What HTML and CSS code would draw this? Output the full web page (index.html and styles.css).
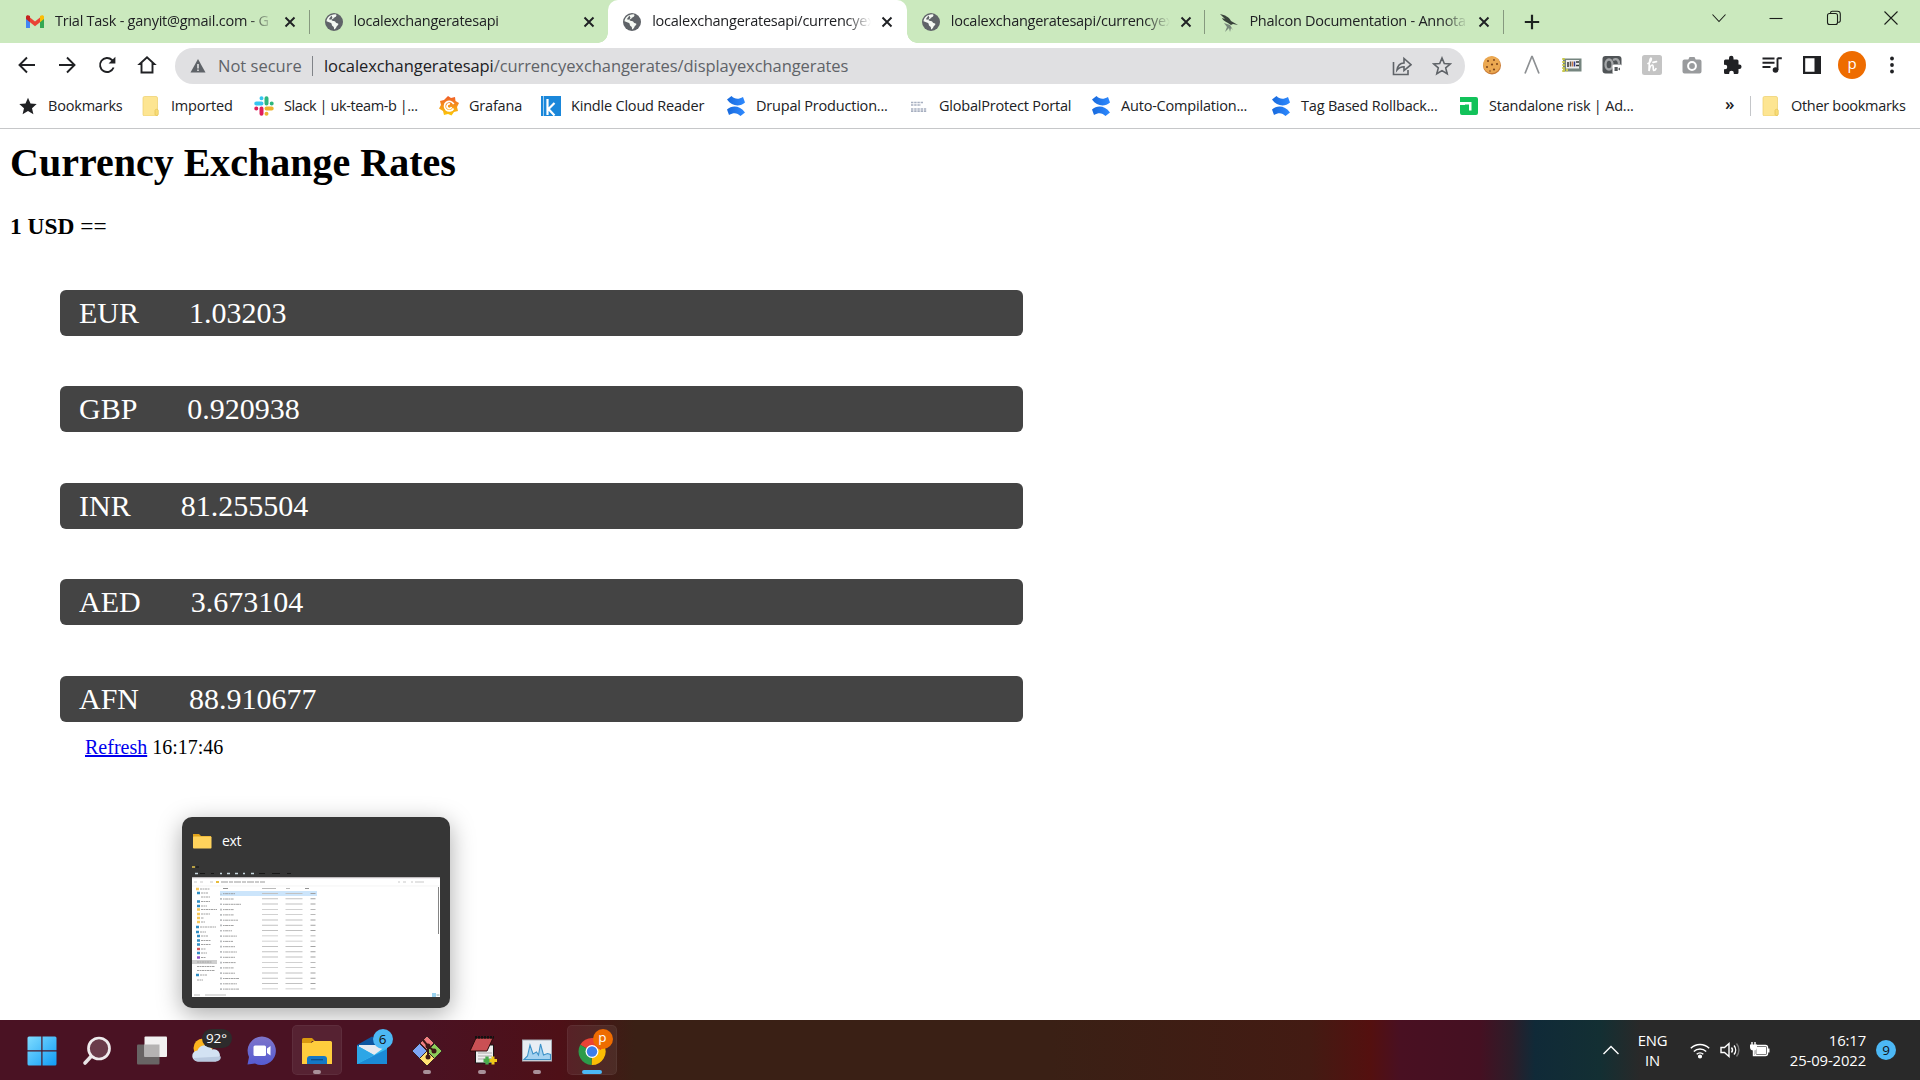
FILE: index.html
```html
<!DOCTYPE html>
<html lang="en">
<head>
<meta charset="utf-8">
<title>localexchangeratesapi/currencyexchangerates</title>
<link rel="stylesheet" href="styles.css">
</head>
<body>
<svg class="defs" width="0" height="0">
  <defs>
    <symbol id="globe" viewBox="0 0 20 20"><circle cx="10" cy="10" r="9" fill="#5f6368"/><path d="M11.500 2.300c1.500.8 1 1.700.3 2.400-.8.600-2 .6-2.200 1.600-.2.900-1.600.7-1.900 1.500-.3.900.7 1.200 1.900 1.100 1.500-.1 1.800.8 2.200 1.700.5.900 2.500.4 2.600 1.500 0 1.300-1.500 1.500-1.900 2.700-.3 1-1 2.100-2 2.600-.8-.4-.3-1.700-.8-2.500-.4-.8-1.900-.9-1.900-2.200 0-1-.4-1.600-1.400-2-1.200-.5-2.600-.8-3.900-1.500C2.800 6 6 2.200 11.500 2.300z" fill="#f4f8f3"/><path d="M7.500 3.500 4.800 7.200l2.600.6 1-2z" fill="#5f6368"/></symbol>
    <symbol id="close" viewBox="0 0 12 12"><path d="M1.500 1.500l9 9m0-9l-9 9" stroke="#1f2124" stroke-width="1.900"/></symbol>
    <symbol id="folder" viewBox="0 0 20 20"><path d="M3.500.5H15a1.500 1.500 0 0 1 1.500 1.500v17a1 1 0 0 1-1 1h-12A1.500 1.500 0 0 1 2 18.500V2A1.500 1.500 0 0 1 3.500.5z" fill="#fde592" stroke="#edcf6b" stroke-width=".7"/><path d="M14 14.500a1.700 1.700 0 0 1 3.300 0V18c0 2-3.300 2-3.300 0z" fill="#f8dc76" stroke="#dfbd4c" stroke-width=".6"/></symbol>
    <linearGradient id="cb" x1="0" x2="1"><stop offset="0" stop-color="#1769dc"/><stop offset="1" stop-color="#2f8aff"/></linearGradient>
    <symbol id="confluence" viewBox="0 0 20 20"><path d="M1 3.500 5.500 0C8.500 3 12 4 17 1L19 6.500C14 11 6 10.500 1 3.500z" fill="url(#cb)"/><path d="M19 16.500 14.500 20C11.500 17 8 16 3 19L1 13.500C6 9 14 9.500 19 16.500z" fill="url(#cb)"/></symbol>
  </defs>
</svg>

<header class="browser">
  <div class="tabs">
    <div class="tab">
      <svg class="fav" viewBox="0 0 20 20"><path d="M1 4.500v11.500h4V9.500z" fill="#4285f4"/><path d="M19 4.500v11.500h-4V9.500z" fill="#34a853"/><path d="M5 5.500 10 9.500 15 5.500V10.300L10 14.200 5 10.300z" fill="#ea4335"/><path d="M1 4.800C1 3 3.300 2.600 5 4v6.300L1 7z" fill="#c5221f"/><path d="M19 4.800C19 3 16.700 2.600 15 4v6.300L19 7z" fill="#fbbc04"/></svg>
      <span class="tab-title">Trial Task - ganyit@gmail.com - G</span>
      <svg class="tab-close"><use href="#close"/></svg>
    </div>
    <div class="tab no-sep">
      <svg class="fav"><use href="#globe"/></svg>
      <span class="tab-title">localexchangeratesapi</span>
      <svg class="tab-close"><use href="#close"/></svg>
    </div>
    <div class="tab active">
      <svg class="fav"><use href="#globe"/></svg>
      <span class="tab-title">localexchangeratesapi/currencyex</span>
      <svg class="tab-close"><use href="#close"/></svg>
    </div>
    <div class="tab">
      <svg class="fav"><use href="#globe"/></svg>
      <span class="tab-title">localexchangeratesapi/currencyex</span>
      <svg class="tab-close"><use href="#close"/></svg>
    </div>
    <div class="tab">
      <svg class="fav" viewBox="0 0 20 20"><path d="M1 2c5 1 9 3 11 7l7 4-5-1-2 1C8 10 4 9 3 6l3 1z" fill="#39443b"/><path d="M5 11l6 2 3 5-2-2-1 4-1-4-4 4 2-5z" fill="#77877a"/></svg>
      <span class="tab-title">Phalcon Documentation - Annota</span>
      <svg class="tab-close"><use href="#close"/></svg>
    </div>
    <svg class="new-tab" viewBox="0 0 16 16"><path d="M8 .8v14.400M.8 8h14.400" stroke="#1d2320" stroke-width="2.200"/></svg>
    <div class="win-controls">
      <svg viewBox="0 0 16 16"><path d="M1.500 4.500 8 11.500l6.500-7" /></svg>
      <svg viewBox="0 0 16 16"><path d="M1.500 8.500h13"/></svg>
      <svg viewBox="0 0 16 16"><rect x="1.500" y="3.500" width="10" height="11" rx="2"/><path d="M4.500 3.500V3a1.800 1.800 0 0 1 1.800-1.800h5.200A2.800 2.800 0 0 1 14.300 4v6.500a1.800 1.800 0 0 1-1.800 1.800h-.8"/></svg>
      <svg viewBox="0 0 16 16"><path d="M1.500 1.500l13 13m0-13l-13 13"/></svg>
    </div>
  </div>

  <div class="toolbar">
    <div class="nav">
      <svg viewBox="0 0 20 20"><path d="M18 10H3M10 2.500 2.500 10l7.500 7.500"/></svg>
      <svg viewBox="0 0 20 20"><path d="M2 10h15M10 2.500l7.500 7.500-7.500 7.500"/></svg>
      <svg viewBox="0 0 20 20"><path d="M16.600 12.500A7 7 0 1 1 15 5l2 2"/><path d="M18.400 1.800v6.800h-6.800z" fill="#202124" stroke="none"/></svg>
      <svg viewBox="0 0 20 20"><path d="M4.500 17.500V9H2.700L10 2.300 17.300 9h-1.800v8.500z"/></svg>
    </div>
    <div class="omnibox">
      <svg class="warn" viewBox="0 0 16 16"><path d="M8 1l7.500 13.500H.5z" fill="#5f6368"/><path d="M8 6v4.500M8 11.600v1.500" stroke="#fff" stroke-width="1.300"/></svg>
      <span class="insecure">Not secure</span>
      <span class="url"><b>localexchangeratesapi</b>/currencyexchangerates/displayexchangerates</span>
      <svg class="share" viewBox="0 0 20 20"><path d="M1.500 6v12.500h14.500V14"/><path d="M5 14c.6-4.500 3-6.800 7-7V2.500L19 8.700l-7 5.800V10.700c-3 0-5.200 1-7 3.300z"/></svg>
      <svg class="share" viewBox="0 0 20 20"><path d="M10 2l2.300 5.500 6 .5-4.600 3.900 1.500 5.900L10 14.600l-5.200 3.200 1.500-5.900L1.700 8l6-.5z"/></svg>
    </div>
    <div class="exts">
      <svg viewBox="0 0 20 20"><circle cx="10" cy="10.500" r="9" fill="#c87a35"/><circle cx="9.700" cy="9.500" r="8.600" fill="#eba851"/><g fill="#7b4219"><circle cx="6" cy="6" r="1"/><circle cx="12" cy="5" r=".9"/><circle cx="10" cy="9.500" r="1.100"/><circle cx="15" cy="9" r="1"/><circle cx="5" cy="12" r="1"/><circle cx="12" cy="14.500" r="1.100"/><circle cx="8" cy="16" r=".8"/></g></svg>
      <svg viewBox="0 0 20 20"><path d="M3 18.500 9.800 1.500h.4L17 18.500" fill="none" stroke="#8d9093" stroke-width="1.700"/></svg>
      <svg viewBox="0 0 20 20"><rect x="1" y="3.500" width="18.500" height="13" fill="#75857f"/><path d="M1.500 3v14M1 15h6" stroke="#c9c94b" stroke-width="2.500" stroke-dasharray="2 1"/><rect x="4" y="5" width="13" height="8.500" fill="#eee"/><path d="M6 7v5M14 7h3M14 10.500h3" stroke="#333" stroke-width="1.500"/><path d="M8.500 6.500v5" stroke="#555" stroke-width="1.500"/><path d="M10.500 6.500v5" stroke="#c87d4d" stroke-width="1.500"/><path d="M12.500 6.500v5" stroke="#303c8c" stroke-width="1.500"/></svg>
      <svg viewBox="0 0 20 20"><rect x=".5" y="1" width="19" height="17.500" rx="3" fill="#505457"/><ellipse cx="7" cy="9.500" rx="3.500" ry="5" fill="none" stroke="#a4a6a8" stroke-width="2.300"/><path d="M11 5c4-2 6 0 6 4" fill="none" stroke="#a4a6a8" stroke-width="2.300"/><rect x="10.500" y="9.500" width="9.500" height="9.500" rx="1.500" fill="#fff"/><path d="M12.500 12h3.200v4h-3.200zM16 14l2-1.500v3z" fill="#55595c"/></svg>
      <svg viewBox="0 0 20 20"><rect width="20" height="20" rx="2.500" fill="#c4c4c4"/><path d="M6 8.500c2.500-.5 4.300-5.500 2.800-5.500C7 3 7.300 11 7 16c.8-4 2-6 3.300-6 1.700 0 .2 5.500 1.700 5.500 1 0 1.500-.7 2-1.800M11 7.300l3.500-.6" fill="none" stroke="#fff" stroke-width="1.700" stroke-linecap="round"/></svg>
      <svg viewBox="0 0 20 20"><path d="M2.500 4.500h3.800L7.500 2h5l1.200 2.500h3.800A2 2 0 0 1 19.500 6.500v10a2 2 0 0 1-2 2h-15a2 2 0 0 1-2-2v-10a2 2 0 0 1 2-2z" fill="#999b9d"/><circle cx="10" cy="11" r="3.900" fill="none" stroke="#fff" stroke-width="2"/></svg>
      <svg viewBox="0 0 20 20"><path d="M7 4.500V3a2 2 0 0 1 4.500 0v1.500H15A1.500 1.500 0 0 1 16.500 6v3.500h.8a2.200 2.200 0 0 1 0 4.500h-.8v3.500A1.500 1.500 0 0 1 15 19h-3.200v-1a2.200 2.200 0 0 0-4.600 0v1H3.500A1.500 1.500 0 0 1 2 17.500v-3.300h1a2.200 2.200 0 0 0 0-4.500H2V6a1.500 1.500 0 0 1 1.500-1.500z" fill="#202124"/></svg>
      <svg viewBox="0 0 20 20"><path d="M.5 3.500h12M.5 7.700h12M.5 12h8M15.500 3.300V15M15.500 3.300h4.300" fill="none" stroke="#202124" stroke-width="1.900"/><circle cx="13.500" cy="15" r="2.800" fill="#202124"/></svg>
      <svg viewBox="0 0 20 20"><path d="M1 1h18v18H1zM3.200 3.200v13.600h9.300V3.200z" fill="#202124" fill-rule="evenodd"/></svg>
      <span class="avatar">p</span>
      <svg viewBox="0 0 20 20"><g fill="#202124"><circle cx="10" cy="3.500" r="1.900"/><circle cx="10" cy="10" r="1.900"/><circle cx="10" cy="16.500" r="1.900"/></g></svg>
    </div>
  </div>

  <div class="bookmarks">
    <div class="bm"><svg viewBox="0 0 20 20"><path d="M10 1.800l2.500 5.700 6.200.6-4.700 4.100 1.400 6.100L10 15.100l-5.400 3.200L6 12.200 1.300 8.100l6.200-.6z" fill="#202124"/></svg>Bookmarks</div>
    <div class="bm"><svg><use href="#folder"/></svg>Imported</div>
    <div class="bm slack"><svg viewBox="0 0 20 20" stroke-width="4" stroke-linecap="round"><path d="M7.500 2.300v0M2.300 7.500h5.200" stroke="#36c5f0"/><path d="M12.500 2.300v5.200M17.700 7.500v0" stroke="#2eb67d"/><path d="M12.500 17.700v0M12.500 12.500h5.200" stroke="#ecb22e"/><path d="M2.300 12.500v0M7.500 12.500v5.200" stroke="#e01e5a"/></svg>Slack | uk-team-b |...</div>
    <div class="bm"><svg viewBox="0 0 20 20"><defs><linearGradient id="gf" x2="0" y2="1"><stop stop-color="#f05a28"/><stop offset="1" stop-color="#fbca0a"/></linearGradient></defs><path d="M9 0l3 2 4-1 .5 4L20 7l-2 4 1 4-4 1-2.500 3.500L9 18l-4 1-1-4-4-2.500L2 9 1 5l4-1z" fill="url(#gf)"/><path d="M14.500 12.500a4.800 4.800 0 1 1 .2-4.300M12.500 11a2.300 2.300 0 1 1-1.500-3" fill="none" stroke="#fff" stroke-width="1.700"/></svg>Grafana</div>
    <div class="bm"><svg viewBox="0 0 20 20"><path d="M0 0h20v20H0z" fill="#1a87da"/><path d="M6.500 3v16M13.500 7l-6 6 6 6.500" fill="none" stroke="#fff" stroke-width="2.200"/><path d="M2.500 0v20" stroke="#9acdf2" stroke-width="1"/></svg>Kindle Cloud Reader</div>
    <div class="bm"><svg><use href="#confluence"/></svg>Drupal Production...</div>
    <div class="bm"><svg viewBox="0 0 20 20"><path d="M2 6.500h12M2 9h10M2 13h16M2 15.200h16" stroke="#a7afc0" stroke-width="1.700" stroke-dasharray="2.400 .8"/></svg>GlobalProtect Portal</div>
    <div class="bm"><svg><use href="#confluence"/></svg>Auto-Compilation...</div>
    <div class="bm"><svg><use href="#confluence"/></svg>Tag Based Rollback...</div>
    <div class="bm"><svg viewBox="0 0 20 20"><path d="M1 1h16A2 2 0 0 1 19 3v14a2 2 0 0 1-2 2H3a2 2 0 0 1-2-2V9h5V7H1z" fill="#12c25a"/><path d="M1 6h11.500v8.500H10V8.500H1z" fill="#fff"/></svg>Standalone risk | Ad...</div>
    <span class="more">»</span>
    <div class="bm other"><svg><use href="#folder"/></svg>Other bookmarks</div>
  </div>
</header>

<main class="page">
  <h1>Currency Exchange Rates</h1>
  <h3>1 USD <span>==</span></h3>
  <ul class="rates">
    <li><span>EUR</span><span>1.03203</span></li>
    <li><span>GBP</span><span>0.920938</span></li>
    <li><span>INR</span><span>81.255504</span></li>
    <li><span>AED</span><span>3.673104</span></li>
    <li><span>AFN</span><span>88.910677</span></li>
  </ul>
  <p class="refresh"><a href="#">Refresh</a> 16:17:46</p>
</main>

<aside class="preview">
  <div class="preview-title">
    <svg viewBox="0 0 20 16"><path d="M1 1h6l2 2h10v4H1z" fill="#e0a21b"/><rect x="1" y="3.500" width="18.500" height="12" rx=".8" fill="#ffd35c"/></svg>
    ext
  </div>
  <svg class="thumb" viewBox="0 0 248 132">
    <path d="M0 2h3" stroke="#e4c44b" stroke-width="1.500"/><path d="M4 2h3" stroke="#111" stroke-width="1"/>
    <path d="M3 8.500h3M28 8.500h2M35 8.500h3M43 8.500h3M51 8.500h2M59 8.500h3" stroke="#c8d8df" stroke-width="1.500"/>
    <path d="M8 8.500h5M19 8.500h3M67 8.500h6M80 8.500h8M95 8.500h4" stroke="#171717" stroke-width="1"/>
    <rect y="12.500" width="248" height="119.500" fill="#fff"/><rect y="12.500" width="248" height="1" fill="#e6dfe3"/>
    <path d="M0 21h248" stroke="#ececec" stroke-width=".6"/>
    <path d="M2 17h3M8 17h3M18 17h3M206 17h2M211 17h3M219 17h2M223 17h9" stroke="#bbb" stroke-width=".8"/>
    <path d="M24 17h3" stroke="#e8bd3c" stroke-width="2"/><path d="M29 17h44" stroke="#999" stroke-width="1" stroke-dasharray="7 1 4 1"/>
    <rect x="28" y="26" width="97" height="5" fill="#cce5fb"/>
    <path d="M31 23.500h5M113 23.500h4" stroke="#777" stroke-width=".8"/><path d="M70 23.500h14M94 23.500h4" stroke="#aaa" stroke-width=".8"/>
    <path d="M29 28.700v97" stroke="#a4a8ac" stroke-width="1.500" stroke-dasharray="1.700 3.600" stroke-dashoffset=".9"/>
    <g stroke="#999" stroke-width=".9" stroke-dasharray="1.600 .5 3 .4">
      <path d="M31 28.700h12M31 34h11M31 39.300h18M31 44.600h11M31 49.900h11M31 55.200h15M31 60.500h11M31 65.800h9M31 71.100h14M31 76.400h10M31 81.700h12M31 87h14M31 92.300h12M31 97.600h13M31 102.900h11M31 108.200h12M31 113.500h16M31 118.800h14M31 124.100h16"/>
    </g>
    <g stroke="#c2c2c2" stroke-width=".9">
      <path d="M78 28v98" stroke-width="16" stroke-dasharray=".9 4.400"/>
      <path d="M102 28v98" stroke-width="17" stroke-dasharray=".9 4.400"/>
      <path d="M121 28v98" stroke="#a2a2a2" stroke-width="5" stroke-dasharray=".9 4.400"/>
    </g>
    <rect y="95" width="25" height="4" fill="#cfcfcf"/>
    <path d="M4 24h3M5 44.500h3M5 49h3M5 53h3M5 57h3" stroke="#f6c85a" stroke-width="2.400"/>
    <path d="M5 28h3M5 36.500h3M5 41h3M4 62h3M4 67h3M5 71h3M5 75.500h3M5 79.500h3M5 88h3M4 110h3" stroke="#318ec4" stroke-width="2.400"/>
    <path d="M5 84h3" stroke="#d3575a" stroke-width="2.400"/><path d="M5 92.500h3" stroke="#8e50c9" stroke-width="2.400"/>
    <path d="M8 24h10M9 28h7M9 32h9M9 36.500h9M9 41h6M9 44.500h16M9 49h9M9 53h3M9 57h4M8 62h16M8 67h6M9 71h7M9 75.500h10M9 79.500h10M9 84h5M9 88h6M9 92.500h5M5 97h15M5 101.500h18M5 105.500h18M8 110h7M5 115h6" stroke="#a2a2a2" stroke-width="1" stroke-dasharray="2 .5"/>
    <path d="M2 130h6M13 130h21" stroke="#aaa" stroke-width=".8"/>
    <path d="M246.500 22v47" stroke="#858585" stroke-width="1"/><rect x="240" y="128" width="4" height="4" fill="#9bd3ef"/><path d="M244.500 130h3" stroke="#8aa" />
  </svg>
</aside>

<footer class="taskbar">
  <div class="apps">
    <div class="app"><svg viewBox="0 0 30 30"><defs><linearGradient id="wn" x2="1" y2="1"><stop stop-color="#7fdcff"/><stop offset="1" stop-color="#109cf5"/></linearGradient></defs><path d="M.5 2a1.500 1.500 0 0 1 1.500-1.500h12.300v13.800H.5zM15.500.5H28A1.500 1.500 0 0 1 29.500 2v12.300h-14zM.5 15.500h13.800v14H2A1.500 1.500 0 0 1 .5 28zM15.500 15.500h14V28a1.500 1.500 0 0 1-1.500 1.500H15.500z" fill="url(#wn)"/></svg></div>
    <div class="app"><svg viewBox="0 0 30 30"><path d="M9.500 20 3 27" stroke="#e9e4e6" stroke-width="3.600" stroke-linecap="round"/><circle cx="17" cy="12.500" r="10.500" fill="#6a3c4b" stroke="#efebed" stroke-width="2.700"/></svg></div>
    <div class="app"><svg viewBox="0 0 30 30"><rect x="0" y="8.500" width="22.500" height="20" rx="1" fill="#686464"/><rect x="7.500" y=".5" width="22.500" height="20.500" rx="1" fill="#f2f1f1"/><path d="M7.500 8.500h15v12.500h-15z" fill="#b5b3b3"/></svg></div>
    <div class="app"><svg viewBox="0 0 30 30"><circle cx="11" cy="12" r="9.500" fill="#fbb31e"/><path d="M6 25.500a5.500 5.500 0 0 1-.5-11 8 8 0 0 1 14.500-1 6 6 0 1 1 3.500 12z" fill="#d3e2f3"/><path d="M1.500 22a5 5 0 0 0 4.500 3.500h18a5.500 5.500 0 0 0 5-5z" fill="#b9c9df"/></svg><span class="temp">92°</span></div>
    <div class="app"><svg viewBox="0 0 30 30"><defs><linearGradient id="ch" x2="0" y2="1"><stop stop-color="#7e75ca"/><stop offset="1" stop-color="#555bd2"/></linearGradient></defs><path d="M15 .5a14.300 14.300 0 1 1-7 27L.5 28.500 2 21A14.300 14.300 0 0 1 15 .5z" fill="url(#ch)"/><rect x="6.500" y="9.500" width="12.500" height="10.500" rx="1.500" fill="#fff"/><path d="M20 12.500l3.500-2.500v9.500L20 17z" fill="#fff"/></svg></div>
    <div class="app open"><svg viewBox="0 0 30 30"><path d="M0 3.500A1.500 1.500 0 0 1 1.500 2h8.500l3 3h-3l-2 3H0z" fill="#d9990f"/><path d="M0 7h9l3-2h16.500A1.500 1.500 0 0 1 30 6.500V28H0z" fill="#ffcd3d"/><path d="M5 28v-5a3 3 0 0 1 3-3h14a3 3 0 0 1 3 3v5z" fill="#1478c5"/><path d="M9 23.700h12" stroke="#0b4f8a" stroke-width="1.300"/></svg></div>
    <div class="app"><svg viewBox="0 0 30 30"><path d="M0 9 15 .5 30 9v5H0z" fill="#0d56a0"/><path d="M2 9h26v10H2z" fill="#e6eaf0"/><path d="M0 9.500 17 19 30 9.500V28H0z" fill="#39bdf2"/><path d="M0 28 30 13v15z" fill="#1b8ad6"/><path d="M0 9.500 17 19 0 28z" fill="#2da6e6"/></svg><span class="badge mail">6</span></div>
    <div class="app running"><svg viewBox="0 0 30 30"><g stroke="#3a2022" stroke-width="1"><path d="M15 0l7 7-7 7-7-7z" fill="#f07e80"/><path d="M7.500 7.500l7.500 7.500-7.500 7.500L0 15z" fill="#7ea6f6"/><path d="M22.500 7.500 30 15l-7.500 7.500L15 15z" fill="#8ccd59"/><path d="M15 15l7.500 7.500L15 30l-7.500-7.500z" fill="#ffe173"/></g><path d="M11 4l5 6v12M16 10l6 5" fill="none" stroke="#3c1715" stroke-width="2"/><g fill="#3c1715"><circle cx="16" cy="10" r="2.500"/><circle cx="16" cy="21" r="2.500"/><circle cx="22" cy="15" r="2.500"/></g></svg></div>
    <div class="app running"><svg viewBox="0 0 30 30"><path d="M8.500 9h18v18h-18z" fill="#eee" stroke="#151515" stroke-width="1"/><path d="M11 17h14M11 20h14M11 23h14" stroke="#aaa"/><path d="M9 2h17l-6 13H3z" fill="#ca5054" stroke="#2a0b0b"/><path d="M8 1.200h19" stroke="#111" stroke-width="2.400" stroke-dasharray="2 1"/><path d="M20 20.500v8M16.500 24.500h7.500" stroke="#48ac4c" stroke-width="3.300"/><path d="M26 20.500v8M22.500 24.500H30" stroke="#f0c719" stroke-width="3"/></svg></div>
    <div class="app running"><svg viewBox="0 0 30 30"><rect x=".5" y="4" width="29" height="21" fill="#e8eef4" stroke="#a7adb5"/><path d="M2 23.500 5.500 20 8 9l3 9 3.500-2 2 3 2-11 3 11 4-1.500 3 1v5z" fill="#a5d3f1" stroke="#3d92c8" stroke-width="1.100"/></svg></div>
    <div class="app open current"><svg viewBox="0 0 30 30"><path d="M15 15.500 3.300 8.700A13.600 13.600 0 0 1 26.800 8.700z" fill="#ea4335"/><path d="M15 15.500 26.800 8.700A13.600 13.600 0 0 1 14.500 29z" fill="#fbbc04"/><path d="M15 15.500 14.500 29A13.600 13.600 0 0 1 3.300 8.700z" fill="#2c9c4a"/><path d="M15 9h11.800l-3 5z" fill="#ea4335"/><circle cx="15" cy="15.500" r="6.500" fill="#fff"/><circle cx="15" cy="15.500" r="5.200" fill="#3b7eea"/></svg><span class="badge profile">p</span></div>
  </div>
  <div class="tray">
    <svg class="chev" viewBox="0 0 18 12"><path d="M1.500 10 9 2.500l7.500 7.500"/></svg>
    <div class="lang">ENG<br>IN</div>
    <svg viewBox="0 0 20 20"><path d="M.8 8.300a13 13 0 0 1 18.400 0M3.800 11.500a8.800 8.800 0 0 1 12.400 0M6.700 14.300a4.700 4.700 0 0 1 6.600 0"/><circle cx="10" cy="16.500" r="1.400" fill="#fff"/></svg>
    <svg viewBox="0 0 20 20"><path d="M1 7.500h3.500L9 3.500v13l-4.500-4H1z"/><path d="M11.500 7.500a4 4 0 0 1 0 5M14 5.500a7 7 0 0 1 0 9"/><path d="M16.500 3.500a10 10 0 0 1 0 13" stroke="#777"/></svg>
    <svg viewBox="0 0 20 20"><rect x="5" y="5.500" width="12.500" height="10" rx="2"/><rect x="7" y="7.500" width="8.500" height="6" fill="#fff"/><path d="M18.500 8.500v4" stroke-width="2"/><path d="M0 4.500h7V7a3.500 3.500 0 0 1-7 0z" fill="#fff" stroke="none"/><path d="M2 2v3M5 2v3M3.500 9v6.500h3"/></svg>
    <div class="clock">16:17<br>25-09-2022</div>
    <span class="count">9</span>
  </div>
</footer>
</body>
</html>
```
FILE: styles.css
```css
* { box-sizing: border-box; }

body {
  margin: 0;
  width: 1920px;
  height: 1080px;
  overflow: hidden;
  display: flex;
  flex-direction: column;
  background: #fff;
  font-family: "Open Sans", "Noto Sans", sans-serif;
  color: #202124;
}

svg { display: block; flex: none; }
.defs { position: absolute; }

.browser { height: 129px; border-bottom: 1px solid #c6c7c9; flex: none; }

/* Tab strip */
.tabs {
  height: 43px;
  display: flex;
  align-items: center;
  background: #cbe9be;
  padding-left: 12px;
}
.tab {
  width: 298.600px;
  height: 43px;
  padding: 0 13px 0 13px;
  display: flex;
  align-items: center;
  position: relative;
}
.tab::after {
  content: "";
  position: absolute;
  right: 1px;
  top: 10px;
  width: 1px;
  height: 24px;
  background: #86997f;
}
.tab.active::after, .tab.no-sep::after { display: none; }
.tab.active { background: #fff; border-radius: 10px 10px 0 0; margin: 0 1px 0 -1px; padding-left: 14px; }
.tab.active::before {
  content: "";
  position: absolute;
  left: -10px;
  right: -10px;
  bottom: 0;
  height: 10px;
  background:
    radial-gradient(circle at 0 0, transparent 9.500px, #fff 10px) left / 10px 10px no-repeat,
    radial-gradient(circle at 100% 0, transparent 9.500px, #fff 10px) right / 10px 10px no-repeat;
}
.fav { width: 20px; height: 20px; margin-right: 10px; }
.tab-title {
  width: 220px;
  flex: none;
  margin-top: -2px;
  font-size: 14.500px;
  letter-spacing: -.25px;
  white-space: nowrap;
  overflow: hidden;
  mask-image: linear-gradient(90deg, #000 194px, transparent 219px);
}
.tab-close { width: 12px; height: 12px; margin-left: 9px; }
.new-tab { width: 16px; height: 16px; margin-left: 19px; }
.win-controls { display: flex; gap: 41.300px; margin: -7px 21px 0 auto; }
.win-controls svg { width: 16px; height: 16px; fill: none; stroke: #1b1f1a; stroke-width: 1.100; }

/* Address row */
.toolbar { height: 45px; display: flex; align-items: center; padding: 0 8px 0 17px; }
.nav { display: flex; gap: 20px; width: 158px; margin-top: -1px; }
.nav svg { width: 20px; height: 20px; fill: none; stroke: #202124; stroke-width: 1.900; }
.omnibox {
  width: 1290px;
  height: 36px;
  border-radius: 18px;
  background: #e0e0e2;
  display: flex;
  align-items: center;
  padding: 0 13px 0 15px;
  font-size: 16.500px;
  color: #5f6368;
}
.warn { width: 16px; height: 16px; margin-right: 12px; }
.insecure { width: 95px; border-right: 1px solid #808388; line-height: 20px; letter-spacing: 0; white-space: nowrap; }
.url { margin: -1px auto 0 11px; letter-spacing: -.07px; white-space: nowrap; }
.url b { font-weight: 400; color: #202124; }
.share { width: 20px; height: 20px; margin-left: 20px; fill: none; stroke: #5f6368; stroke-width: 1.600; }
.exts { display: grid; grid-template-columns: repeat(11, 40px); justify-items: center; align-items: center; margin: -1px 0 0 7px; }
.exts svg { width: 20px; height: 20px; }
.avatar {
  width: 28px;
  height: 28px;
  border-radius: 50%;
  background: #ee6c00;
  color: #fff;
  font-size: 15px;
  line-height: 25px;
  text-align: center;
}

/* Bookmarks bar */
.bookmarks {
  height: 35px;
  display: grid;
  grid-template-columns: 123px 113px 185px 102px 185px 183px 182px 180px 188px 1fr 25px 170px;
  align-items: center;
  padding-left: 18px;
}
.bm { display: flex; align-items: center; gap: 10px; font-size: 14.500px; letter-spacing: -.2px; white-space: nowrap; }
.slack { letter-spacing: -.4px; }
.bm svg { width: 20px; height: 20px; }
.more { font-size: 17px; font-weight: 600; line-height: 18px; margin-top: -4px; }
.other { border-left: 1px solid #c4c6c9; height: 20px; padding-left: 10px; letter-spacing: -.3px; }

/* Page content */
.page { flex: 1; font-family: "Liberation Serif", serif; color: #000; }
h1 { margin: 10px 0 0 10px; font-size: 40px; line-height: 48px; }
h3 { margin: 26px 0 0 10px; font-size: 23.400px; line-height: 26px; }
h3 span { font-weight: 400; }
.rates { list-style: none; margin: 51px 0 0 60px; padding: 0; width: 963px; display: grid; gap: 50.400px; }
.rates li {
  height: 46px;
  display: flex;
  gap: 50px;
  padding-left: 19px;
  border-radius: 6px;
  background: #444;
  color: #fff;
  font-size: 30px;
  line-height: 46px;
}
.refresh { margin: 14px 0 0 85px; font-size: 20px; line-height: 23px; }
.refresh a { color: #0000ee; text-decoration-thickness: 2px; }

/* Taskbar window preview floating over the page */
.preview {
  position: absolute;
  left: 182px;
  top: 817px;
  width: 268px;
  height: 191px;
  padding: 15px 10px 10px;
  border-radius: 10px;
  background: #363636;
  box-shadow: 0 6px 24px rgba(0, 0, 0, .34);
  color: #fff;
}
.preview-title { display: flex; align-items: center; gap: 10px; height: 17px; margin-bottom: 1px; font-size: 14px; letter-spacing: -.3px; }
.preview-title svg { width: 20px; height: 16px; }
.thumb { width: 248px; height: 132px; margin-top: 16px; }

/* Taskbar */
.taskbar {
  height: 60px;
  flex: none;
  position: relative;
  display: flex;
  justify-content: space-between;
  background: linear-gradient(90deg, #4a1223 0, #4a1223 420px, #4e1017 560px, #3a2015 635px, #3a2015 1050px, #431b13 1310px, #54100f 1370px, #491022 1400px, #451022 1480px, #2c1d29 1512px, #102a38 1535px, #132f33 1600px, #292929 1640px, #292929 100%);
}
.apps { display: grid; grid-template-columns: repeat(11, 55px); padding-left: 14px; }
.app { position: relative; width: 50px; height: 50px; margin: 5px 2.500px; border-radius: 5px; display: flex; justify-content: center; padding-top: 10.500px; }
.app > svg { width: 30px; height: 30px; }
.app.open { background: rgba(255, 255, 255, .07); box-shadow: inset 0 0 0 1px rgba(255, 255, 255, .05); }
.app.open::after, .app.running::after {
  content: "";
  position: absolute;
  left: 21px;
  bottom: 1px;
  width: 8px;
  height: 4px;
  border-radius: 2px;
  background: #a9919a;
}
.app.current::after { left: 15px; width: 20px; background: #4cb8f5; }
.temp {
  position: absolute;
  left: 20px;
  top: 4px;
  width: 30px;
  height: 19px;
  border-radius: 10px;
  background: #2d2b2c;
  color: #fff;
  font-size: 13.500px;
  line-height: 19px;
  text-align: center;
}
.badge {
  position: absolute;
  right: 4px;
  top: 4px;
  width: 20px;
  height: 20px;
  border-radius: 50%;
  font-size: 13.500px;
  line-height: 20px;
  text-align: center;
}
.mail { background: #4cb8f5; color: #111; }
.profile { background: #ee6c00; color: #fff; line-height: 17px; }

.tray { display: flex; align-items: center; color: #fff; font-size: 14.800px; line-height: 20px; }
.tray svg { width: 20px; height: 20px; fill: none; stroke: #fff; stroke-width: 1.400; margin-right: 10px; }
.tray .chev { width: 18px; height: 12px; margin-right: 16px; }
.lang { width: 33px; text-align: center; letter-spacing: -.2px; margin-right: 21px; }
.clock { width: 86px; text-align: right; letter-spacing: -.1px; white-space: nowrap; }
.count {
  width: 20px;
  height: 20px;
  margin: 0 24px 0 10px;
  border-radius: 50%;
  background: #4cb8f5;
  color: #111;
  font-size: 13.500px;
  text-align: center;
}
```
